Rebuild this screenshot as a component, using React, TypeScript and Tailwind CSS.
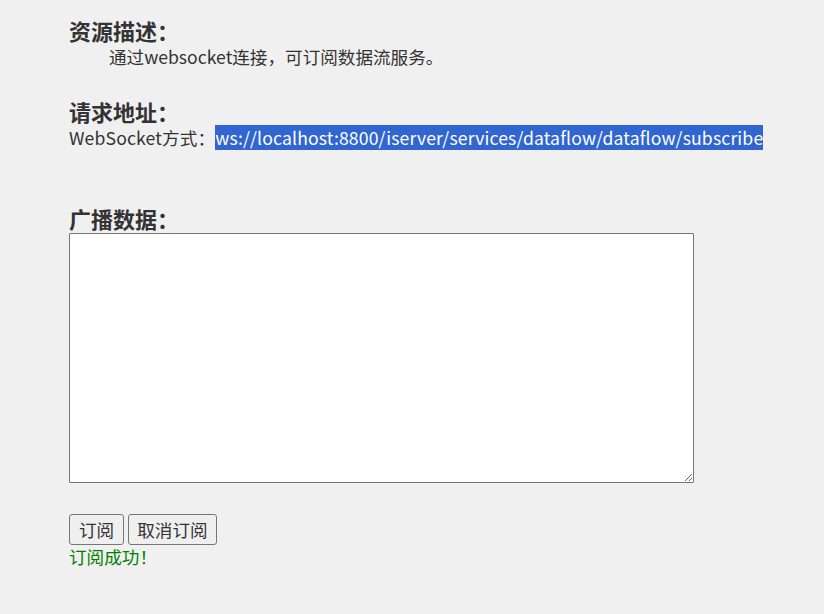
import { useState } from "react"

export default function App() {
  const [msg] = useState("订阅成功！")
  const font = { fontFamily: '"Noto Sans CJK SC", "Noto Sans", sans-serif' }

  return (
    <div className="min-h-[614px] w-full bg-[#f0f0f0] text-[#333333] pl-[69px] pt-[17px]" style={font}>
      <h3 className="text-[22px] leading-[26px] font-bold">资源描述：</h3>
      <p className="mt-[2px] text-[17.6px] leading-[24px] pl-[40px]">通过websocket连接，可订阅数据流服务。</p>

      <h3 className="mt-[29px] text-[22px] leading-[26px] font-bold">请求地址：</h3>
      <p className="mt-[1px] text-[17.6px] leading-[26px] whitespace-nowrap tracking-[0.15px]">
        WebSocket方式：
        <span className="bg-[#3166d1] text-white">ws://localhost:8800/iserver/services/dataflow/dataflow/subscribe</span>
      </p>

      <h3 className="mt-[54px] text-[22px] leading-[26px] font-bold">广播数据：</h3>
      <textarea
        className="mt-[2px] block w-[625px] h-[250px] bg-white border border-[#767676] rounded-[1px] outline-none"
        readOnly
      />

      <div className="mt-[31px] flex gap-[4px]">
        <button className="h-[31px] px-[9px] text-[17.6px] leading-[20px] bg-[#efefef] border border-[#767676] rounded-[3px] text-[#333333]">
          订阅
        </button>
        <button className="h-[31px] px-[8px] text-[17.6px] leading-[20px] bg-[#efefef] border border-[#767676] rounded-[3px] text-[#333333]">
          取消订阅
        </button>
      </div>
      <div className="text-[17.6px] leading-[24px] text-[#008000]">{msg}</div>
    </div>
  )
}
